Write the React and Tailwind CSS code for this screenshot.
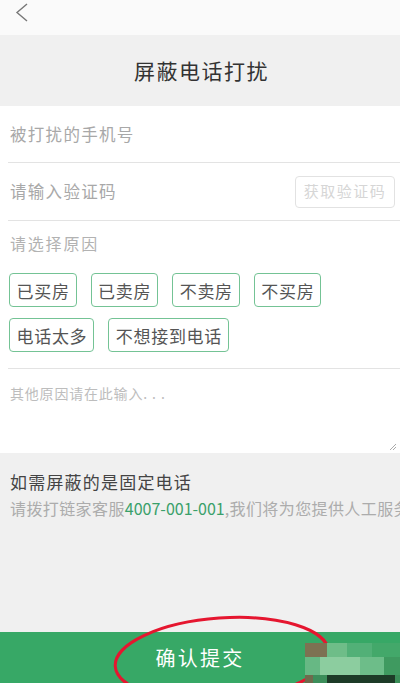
import { useState } from 'react'

const reasons = [
  ['已买房', '已卖房', '不卖房', '不买房'],
  ['电话太多', '不想接到电话'],
]

const font = { fontFamily: '"Noto Sans CJK SC", "Noto Sans", sans-serif' }

const App = () => {
  const [picked, setPicked] = useState([])

  const toggle = (r) =>
    setPicked((p) => (p.includes(r) ? p.filter((x) => x !== r) : [...p, r]))

  return (
    <div className="w-[400px] h-[683px] flex flex-col bg-white overflow-hidden relative" style={font}>
      {/* top bar */}
      <div className="h-[35px] bg-[#fafafa] flex items-start pl-[15px] pt-[3px]">
        <svg width="16" height="19" viewBox="0 0 16 19" fill="none">
          <path d="M12 1 L2 9.5 L12 18" stroke="#777" strokeWidth="1.4" />
        </svg>
      </div>

      {/* title */}
      <div className="h-[71px] bg-[#f0f0f0] flex items-center justify-center">
        <h1 className="text-[21px] text-[#333] tracking-[1.5px] pl-[3px]">屏蔽电话打扰</h1>
      </div>

      {/* phone */}
      <div className="h-[57px] ml-[8px] pl-[2px] flex items-center border-b border-[#e3e3e3] text-[16.5px] tracking-[1.3px] text-[#a8a8a8]">
        被打扰的手机号
      </div>

      {/* code */}
      <div className="h-[58px] ml-[8px] pl-[2px] pr-[5px] flex items-center justify-between border-b border-[#e3e3e3]">
        <span className="text-[16.5px] tracking-[1.3px] text-[#a8a8a8]">请输入验证码</span>
        <button className="w-[100px] h-[32px] border border-[#e2e2e2] rounded-[4px] text-[15px] tracking-[1.5px] text-[#d6d6d6]">
          获取验证码
        </button>
      </div>

      {/* reasons */}
      <div className="h-[148px] ml-[8px] pt-[12px] border-b border-[#e3e3e3] flex flex-col">
        <p className="pl-[2px] text-[16px] tracking-[1.8px] leading-[20px] text-[#b2b2b2]">请选择原因</p>
        <div className="mt-[20px] flex flex-col gap-[11px]">
          {reasons.map((row, i) => (
            <div key={i} className="flex gap-[14px] pl-[1px]">
              {row.map((r) => (
                <button
                  key={r}
                  onClick={() => toggle(r)}
                  className={`h-[34px] pl-[6.5px] pr-[6px] border-[1.5px] border-[#74c395] rounded-[4px] text-[17px] tracking-[0.7px] leading-none ${
                    picked.includes(r) ? 'bg-[#3aa868] text-white' : 'text-[#555]'
                  }`}
                >
                  {r}
                </button>
              ))}
            </div>
          ))}
        </div>
      </div>

      {/* other reason */}
      <div className="h-[84px] relative">
        <textarea
          className="w-full h-full px-[10px] pt-[13px] text-[14px] text-[#555] outline-none resize-none"
          style={font}
        />
        <p className="absolute left-[10px] top-[14px] text-[14px] leading-[20px] tracking-[0.8px] text-[#bdbdbd] pointer-events-none">
          其他原因请在此输入<span className="tracking-[5px]">...</span>
        </p>
        <svg className="absolute right-[4px] bottom-[3px]" width="6" height="6" viewBox="0 0 6 6">
          <path d="M0 6 L6 0 M3 6 L6 3" stroke="#aaa" strokeWidth="1" />
        </svg>
      </div>

      {/* landline note */}
      <div className="h-[179px] bg-[#f0f0f0] pl-[10px] pt-[17px]">
        <p className="text-[17px] tracking-[1.2px] leading-[24px] text-[#444]">如需屏蔽的是固定电话</p>
        <p className="mt-[4px] text-[16px] tracking-[0.4px] leading-[20px] text-[#acacac] whitespace-nowrap">
          请拨打链家客服<span className="text-[#3aa06a] tracking-normal">4007-001-001</span>,我们将为您提供人工服务
        </p>
      </div>

      {/* submit */}
      <button className="h-[51px] bg-[#37a866] text-white text-[20px] tracking-[2.3px]">确认提交</button>

      {/* annotation ellipse */}
      <svg className="absolute left-0 top-[600px] pointer-events-none" width="400" height="83" viewBox="0 600 400 83">
        <ellipse cx="222" cy="659" rx="107" ry="41" fill="none" stroke="#e5162f" strokeWidth="3" transform="rotate(-4 222 659)" />
      </svg>

      {/* mosaic watermark */}
      <div className="absolute left-[305px] top-[643px] w-[95px] h-[40px] flex flex-col pointer-events-none">
        <div className="h-[14px] flex">
          <div className="w-[22px] bg-[#7d7152]" />
          <div className="w-[20px] bg-[#6ebd88]" />
          <div className="w-[25px] bg-[#52b077]" />
          <div className="flex-1 bg-[#43a86a]" />
        </div>
        <div className="h-[18px] flex">
          <div className="w-[15px] bg-[#67b884]" />
          <div className="w-[40px] bg-[#8ccd9f]" />
          <div className="w-[24px] bg-[#6dbd89]" />
          <div className="flex-1 bg-[#3f9a60]" />
        </div>
        <div className="h-[8px] flex">
          <div className="w-[8px] bg-[#6f6a4c]" />
          <div className="w-[14px] bg-[#3c8e5a]" />
          <div className="w-[68px] bg-[#1d3b27]" />
          <div className="flex-1 bg-[#3a8e58]" />
        </div>
      </div>
    </div>
  )
}

export default App
